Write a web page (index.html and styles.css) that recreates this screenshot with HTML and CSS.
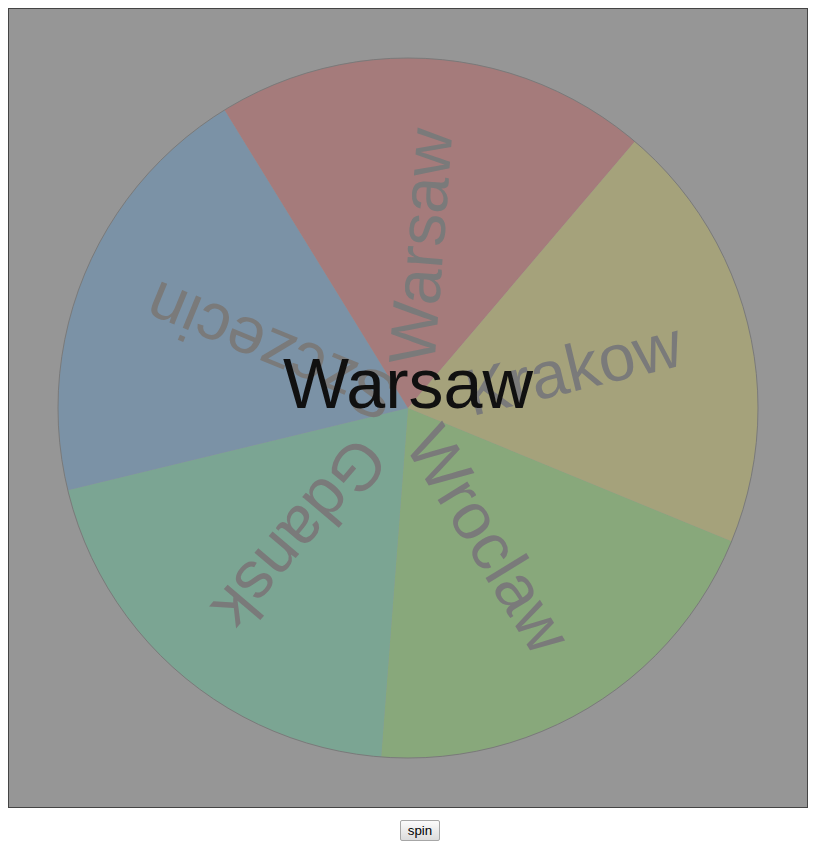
FILE: index.html
```html
<!DOCTYPE html>
<html>
<head>
<meta charset="utf-8">
<link rel="stylesheet" href="styles.css">
</head>
<body>
<div class="board">
  <svg class="wheel" width="798" height="798" viewBox="0 0 798 798" xmlns="http://www.w3.org/2000/svg">
    <path class="seg seg-green" d="M399 399 L722.59 532.37 A350 350 0 0 1 372.15 747.97 Z"/>
    <path class="seg seg-teal" d="M399 399 L372.15 747.97 A350 350 0 0 1 58.81 481.30 Z"/>
    <path class="seg seg-blue" d="M399 399 L58.81 481.30 A350 350 0 0 1 215.60 100.89 Z"/>
    <path class="seg seg-red" d="M399 399 L215.60 100.89 A350 350 0 0 1 625.84 132.46 Z"/>
    <path class="seg seg-khaki" d="M399 399 L625.84 132.46 A350 350 0 0 1 722.59 532.37 Z"/>
    <circle class="rim" cx="399" cy="399" r="350"/>
    <text class="label" transform="translate(399 399) rotate(58.4)" x="280" y="23">Wroclaw</text>
    <text class="label" transform="translate(399 399) rotate(130.4)" x="280" y="23">Gdansk</text>
    <text class="label" transform="translate(399 399) rotate(202.4)" x="280" y="23">Szczecin</text>
    <text class="label" transform="translate(399 399) rotate(274.4)" x="280" y="23">Warsaw</text>
    <text class="label" transform="translate(399 399) rotate(346.4)" x="280" y="23">Krakow</text>
    <text class="current" x="399" y="399">Warsaw</text>
  </svg>
</div>
<div class="controls">
  <button class="spin" type="button">spin</button>
</div>
</body>
</html>
```
FILE: styles.css
```css
html, body {
  margin: 0;
  padding: 0;
  background: #ffffff;
}
body {
  padding: 8px;
  font-family: "Liberation Sans", Arial, sans-serif;
}
.board {
  box-sizing: border-box;
  width: 800px;
  height: 800px;
  border: 1px solid #444444;
  background: #969696;
}
.wheel {
  display: block;
}
.seg {
  stroke: none;
}
.seg-green { fill: #88a87b; }
.seg-teal { fill: #7ba593; }
.seg-blue { fill: #7b92a6; }
.seg-red { fill: #a57b7b; }
.seg-khaki { fill: #a5a27b; }
.rim {
  fill: none;
  stroke: #7a7a7a;
  stroke-width: 1;
}
.label {
  font-family: "Liberation Sans", Arial, sans-serif;
  font-size: 66px;
  fill: #7a7a7a;
  text-anchor: end;
}
.current {
  font-family: "Liberation Sans", Arial, sans-serif;
  font-size: 70px;
  fill: #101010;
  text-anchor: middle;
}
.controls {
  display: flex;
  padding-top: 12px;
  padding-left: 392px;
}
.spin {
  box-sizing: border-box;
  width: 40px;
  height: 21px;
  padding: 1px 6px;
  font-family: "Liberation Sans", Arial, sans-serif;
  font-size: 13.33px;
  color: #000000;
  background: linear-gradient(#fbfbfb, #dcdcdc);
  border: 1px solid #a6a6a6;
  border-radius: 2px;
}
```
